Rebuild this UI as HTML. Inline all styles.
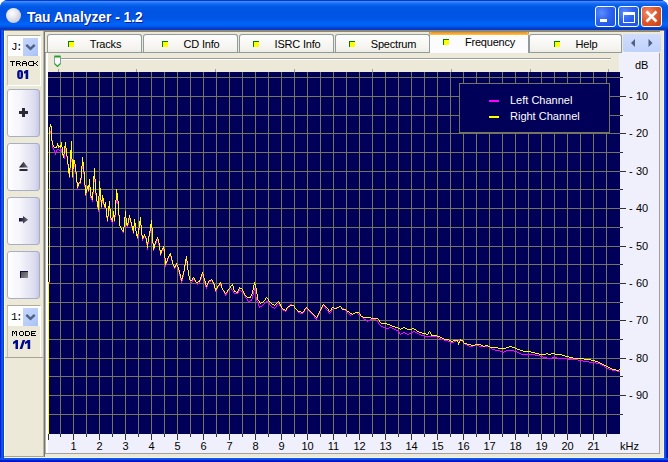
<!DOCTYPE html><html><head><meta charset="utf-8"><style>
*{margin:0;padding:0;box-sizing:content-box}
html,body{width:668px;height:462px;overflow:hidden;background:#fff;font-family:"Liberation Sans",sans-serif}
.abs{position:absolute}
.tab{position:absolute}
.tl{font-size:11px;color:#000;letter-spacing:-0.2px;line-height:12px;white-space:nowrap}
.sbtn{position:absolute;left:7px;width:31px;height:46px;border:1px solid #a7afc4;border-radius:3px;background:linear-gradient(90deg,#ffffff 0%,#f4f4fb 40%,#dcdcf0 85%,#c8c8e4 100%)}
</style></head><body>
<div class="abs" style="left:0;top:0;width:668px;height:462px;background:#0831d9;border-radius:8px 8px 0 0"></div>
<div class="abs" style="left:0;top:0;width:668px;height:30px;border-radius:8px 8px 0 0;background:linear-gradient(#0838d0 0px,#0838d0 1px,#3d8dff 1.01px,#3a8bff 2px,#1b72f6 3px,#0a62ec 5px,#0058e6 7px,#0054e3 12px,#0056e6 19px,#0062f6 23px,#0064f8 25px,#0052e2 27px,#0040d0 28px,#0838c0 29px,#0838c0 30px)"></div>
<div class="abs" style="left:0;top:30px;width:4px;height:432px;background:linear-gradient(90deg,#0010d0,#0030e0 1px,#1e6af0 2px,#0044e0 3px,#0044e0 4px)"></div>
<div class="abs" style="left:664px;top:30px;width:4px;height:432px;background:linear-gradient(90deg,#0044e0,#1e6af0 1px,#0030e0 2px,#0010c8 3px,#0010c8 4px)"></div>
<div class="abs" style="left:0;top:458px;width:668px;height:4px;background:linear-gradient(#0044e0,#1e6af0 1px,#0030e0 2px,#0010c8 3px,#0010c8 4px)"></div>
<div class="abs" style="left:6px;top:8px;width:15px;height:15px;border-radius:50%;background:radial-gradient(circle at 40% 35%,#ffffff 0%,#e8e8f0 35%,#c8c8d8 75%,#a0a8c8 100%)"></div>
<div class="abs" style="left:27px;top:10px;font-size:13.8px;font-weight:bold;color:#fff;text-shadow:1px 1px 0 #0a1e8c;white-space:nowrap;line-height:16px">Tau Analyzer - 1.2</div>
<div class="abs" style="left:595px;top:6px;width:19px;height:19px;border:1px solid #fff;border-radius:3px;background:radial-gradient(circle at 30% 30%,#5a8cff 0%,#2d63f0 45%,#1c50e0 100%);overflow:hidden"><div class="abs" style="left:4px;top:12px;width:7px;height:3px;background:#fff"></div></div>
<div class="abs" style="left:618px;top:6px;width:19px;height:19px;border:1px solid #fff;border-radius:3px;background:radial-gradient(circle at 30% 30%,#5a8cff 0%,#2d63f0 45%,#1c50e0 100%);overflow:hidden"><div class="abs" style="left:4px;top:5px;width:10px;height:7px;border:1px solid #fff;border-top:3px solid #fff"></div></div>
<div class="abs" style="left:641px;top:6px;width:19px;height:19px;border:1px solid #fff;border-radius:3px;background:radial-gradient(circle at 30% 30%,#f08a68 0%,#e05a30 45%,#c83c10 100%);overflow:hidden"><svg class="abs" style="left:0;top:0" width="19" height="19"><path d="M4.5,4.5 L14.5,14.5 M14.5,4.5 L4.5,14.5" stroke="#fff" stroke-width="2.6" stroke-linecap="butt"/></svg></div>
<div class="abs" style="left:4px;top:30px;width:660px;height:428px;background:#ece9d8"></div>
<div class="abs" style="left:4px;top:30px;width:660px;height:1px;background:#8d8a7a"></div>
<div class="abs" style="left:7px;top:35px;width:32px;height:49px;border:1px solid #fff;border-top-color:#b0ac9c;border-left-color:#c4c0b0;background:#ece9d8"></div><div class="abs" style="left:8px;top:36px;width:32px;height:20px;background:#fff"></div><div class="abs" style="left:23px;top:38px;width:15px;height:18px;background:linear-gradient(135deg,#c6d6fc,#b8cdfa 60%,#a8c0f8)"></div><svg class="abs" style="left:23px;top:38px" width="15" height="18"><path d="M3.3,6.8 L7.5,10.8 L11.7,6.8" stroke="#4d6185" stroke-width="2.4" fill="none"/></svg><div class="abs" style="left:11px;top:42px;font-family:'Liberation Mono';font-size:11px;line-height:11px;letter-spacing:-1.5px;color:#000">J:</div>
<div class="sbtn" style="top:89px"><svg class="abs" style="left:0;top:0" width="31" height="46"><path d="M11,22.5 h9 M15.5,18 v9" stroke="#2a2a36" stroke-width="3"/></svg></div>
<div class="sbtn" style="top:143px"><svg class="abs" style="left:0;top:0" width="31" height="46"><defs><linearGradient id="eg" x1="0" x2="1" y1="0" y2="0"><stop offset="0" stop-color="#1a1a2a"/><stop offset="1" stop-color="#707078"/></linearGradient></defs><path d="M11,23.5 L15.5,17.8 L20,23.5 Z" fill="url(#eg)"/><rect x="11.5" y="25" width="8" height="2" fill="#2a2a36"/></svg></div>
<div class="sbtn" style="top:197px"><svg class="abs" style="left:0;top:0" width="31" height="46"><defs><linearGradient id="ag" x1="0" x2="1" y1="0" y2="0"><stop offset="0" stop-color="#101038"/><stop offset="1" stop-color="#707070"/></linearGradient></defs><path d="M11,20 H15 V18 L20.2,21.8 L15,25.6 V23.5 H11 Z" fill="url(#ag)"/></svg></div>
<div class="sbtn" style="top:251px"><div class="abs" style="left:12px;top:19px;width:7px;height:6px;border-left:1px solid #101040;border-top:1px solid #101040;background:linear-gradient(135deg,#505058,#909090)"></div></div>
<div class="abs" style="left:7px;top:305px;width:32px;height:51px;border:1px solid #fff;border-top-color:#b0ac9c;border-left-color:#c4c0b0;background:#ece9d8"></div><div class="abs" style="left:8px;top:306px;width:32px;height:20px;background:#fff"></div><div class="abs" style="left:23px;top:308px;width:15px;height:18px;background:linear-gradient(135deg,#c6d6fc,#b8cdfa 60%,#a8c0f8)"></div><svg class="abs" style="left:23px;top:308px" width="15" height="18"><path d="M3.3,6.8 L7.5,10.8 L11.7,6.8" stroke="#4d6185" stroke-width="2.4" fill="none"/></svg><div class="abs" style="left:11px;top:312px;font-family:'Liberation Mono';font-size:11px;line-height:11px;letter-spacing:-1.5px;color:#000">1:</div>
<svg class="abs" style="left:0;top:0" width="48" height="462"><path d="M10,61h5v1h-5zM12,62h1v1h-1zM12,63h1v1h-1zM12,64h1v1h-1zM12,65h1v1h-1zM16,61h4v1h-4zM16,62h1v1h-1zM20,62h1v1h-1zM16,63h4v1h-4zM16,64h1v1h-1zM19,64h1v1h-1zM16,65h1v1h-1zM20,65h1v1h-1zM23,61h3v1h-3zM22,62h1v1h-1zM26,62h1v1h-1zM22,63h5v1h-5zM22,64h1v1h-1zM26,64h1v1h-1zM22,65h1v1h-1zM26,65h1v1h-1zM29,61h4v1h-4zM28,62h1v1h-1zM28,63h1v1h-1zM28,64h1v1h-1zM29,65h4v1h-4zM33,61h1v1h-1zM37,61h1v1h-1zM33,62h1v1h-1zM36,62h1v1h-1zM33,63h3v1h-3zM33,64h1v1h-1zM36,64h1v1h-1zM33,65h1v1h-1zM37,65h1v1h-1z" fill="#000000" shape-rendering="crispEdges"/></svg>
<svg class="abs" style="left:0;top:0" width="48" height="462"><path d="M12,331h2v1h-2zM15,331h2v1h-2zM12,332h1v1h-1zM14,332h1v1h-1zM16,332h1v1h-1zM12,333h1v1h-1zM14,333h1v1h-1zM16,333h1v1h-1zM12,334h1v1h-1zM16,334h1v1h-1zM12,335h1v1h-1zM16,335h1v1h-1zM20,331h3v1h-3zM19,332h1v1h-1zM23,332h1v1h-1zM19,333h1v1h-1zM23,333h1v1h-1zM19,334h1v1h-1zM23,334h1v1h-1zM20,335h3v1h-3zM25,331h4v1h-4zM25,332h1v1h-1zM29,332h1v1h-1zM25,333h1v1h-1zM29,333h1v1h-1zM25,334h1v1h-1zM29,334h1v1h-1zM25,335h4v1h-4zM31,331h5v1h-5zM31,332h1v1h-1zM31,333h4v1h-4zM31,334h1v1h-1zM31,335h5v1h-5z" fill="#000000" shape-rendering="crispEdges"/></svg>
<svg class="abs" style="left:0;top:0" width="48" height="462"><path d="M19.8,70 h0.6 a2.6,3.2 0 0 1 2.6,3.2 v2.6 a2.6,3.2 0 0 1 -2.6,3.2 h-0.6 a2.6,3.2 0 0 1 -2.6,-3.2 v-2.6 a2.6,3.2 0 0 1 2.6,-3.2 z M19.6,72.2 v4.6 a0.5,0.5 0 0 0 1,0 v-4.6 a0.5,0.5 0 0 0 -1,0 z" fill="#000a8a" fill-rule="evenodd"/><path d="M24,71.6 L26,70 H28.2 V79 H25.6 V72.9 L24,73.8 Z" fill="#000a8a"/><path d="M13,342 L15.8,340 H18 V349 H15.5 V343 L13,344.2 Z" fill="#000a8a"/><path d="M19.6,349 L22.2,349 L25.2,340 L22.6,340 Z" fill="#000a8a"/><path d="M25,342 L27.8,340 H30.2 V349 H27.6 V343 L25,344.2 Z" fill="#000a8a"/></svg>
<div class="abs" style="left:4px;top:357px;width:39px;height:1px;background:#a8a494"></div>
<div class="abs" style="left:4px;top:456px;width:40px;height:1px;background:#a8a494"></div>
<div class="abs" style="left:4px;top:31px;width:1px;height:425px;background:#fffdf4"></div>
<div class="abs" style="left:4px;top:457px;width:660px;height:1px;background:#f4f4f0"></div>
<div class="abs" style="left:663px;top:31px;width:1px;height:427px;background:#f4f4f0"></div>
<div class="abs" style="left:43px;top:31px;width:1px;height:426px;background:#b8b4a4"></div>
<div class="abs" style="left:44px;top:31px;width:1px;height:426px;background:#787670"></div>
<div class="abs" style="left:44px;top:31px;width:616px;height:1px;background:#8a887c"></div>
<div class="abs" style="left:45px;top:52px;width:577px;height:1px;background:#919b9c"></div>
<div class="abs" style="left:622px;top:52px;width:37px;height:1px;background:#f4f4fc"></div>
<div class="abs" style="left:45px;top:53px;width:614px;height:400px;background:#f0f0fc"></div>
<div class="abs" style="left:45px;top:53px;width:1px;height:400px;background:#b4b4ae"></div>
<div class="abs" style="left:46px;top:53px;width:2px;height:400px;background:#ffffff"></div>
<div class="abs" style="left:659px;top:53px;width:1px;height:401px;background:#a0a0a0"></div>
<div class="abs" style="left:45px;top:453px;width:615px;height:1px;background:#a0a0a0"></div>
<div class="abs" style="left:48px;top:53px;width:571px;height:19px;background:#ece9d8"></div>
<div class="abs" style="left:56px;top:58px;width:555px;height:1px;background:#9d9d98"></div>
<div class="abs" style="left:56px;top:59px;width:555px;height:1px;background:#ffffff"></div>
<div class="abs" style="left:58px;top:69px;width:1px;height:3px;background:#a0a0a0"></div><div class="abs" style="left:136px;top:69px;width:1px;height:3px;background:#a0a0a0"></div><div class="abs" style="left:215px;top:69px;width:1px;height:3px;background:#a0a0a0"></div><div class="abs" style="left:294px;top:69px;width:1px;height:3px;background:#a0a0a0"></div><div class="abs" style="left:372px;top:69px;width:1px;height:3px;background:#a0a0a0"></div><div class="abs" style="left:451px;top:69px;width:1px;height:3px;background:#a0a0a0"></div><div class="abs" style="left:530px;top:69px;width:1px;height:3px;background:#a0a0a0"></div><div class="abs" style="left:608px;top:69px;width:1px;height:3px;background:#a0a0a0"></div>
<svg class="abs" style="left:53px;top:55px" width="9" height="13"><path d="M1.5,1.5 h6 v7 l-3,3 l-3,-3 z" fill="#fafafa" stroke="#8c9cac" stroke-width="1"/><path d="M1.5,1.5 h6" stroke="#21a121" stroke-width="2"/><path d="M1.5,8.5 l3,3 l3,-3" stroke="#21a121" stroke-width="1.2" fill="none"/></svg>
<div class="tab" style="left:47px;top:34px;width:93px;height:17px;background:linear-gradient(#fefefe,#f4f3ee 80%,#ecebe6);border:1px solid #919b9c;border-bottom:none;border-radius:3px 3px 0 0;"><div style="position:absolute;left:0;right:0;top:3px;height:12px;display:flex;justify-content:center;align-items:center"><span style="display:inline-block;width:5px;height:5px;background:#ffff00;border-left:1px solid #008000;border-top:1px solid #008000;margin-right:16px;margin-top:0px"></span><span class="tl">Tracks</span></div></div>
<div class="tab" style="left:143px;top:34px;width:93px;height:17px;background:linear-gradient(#fefefe,#f4f3ee 80%,#ecebe6);border:1px solid #919b9c;border-bottom:none;border-radius:3px 3px 0 0;"><div style="position:absolute;left:0;right:0;top:3px;height:12px;display:flex;justify-content:center;align-items:center"><span style="display:inline-block;width:5px;height:5px;background:#ffff00;border-left:1px solid #008000;border-top:1px solid #008000;margin-right:16px;margin-top:0px"></span><span class="tl">CD Info</span></div></div>
<div class="tab" style="left:239px;top:34px;width:93px;height:17px;background:linear-gradient(#fefefe,#f4f3ee 80%,#ecebe6);border:1px solid #919b9c;border-bottom:none;border-radius:3px 3px 0 0;"><div style="position:absolute;left:0;right:0;top:3px;height:12px;display:flex;justify-content:center;align-items:center"><span style="display:inline-block;width:5px;height:5px;background:#ffff00;border-left:1px solid #008000;border-top:1px solid #008000;margin-right:16px;margin-top:0px"></span><span class="tl">ISRC Info</span></div></div>
<div class="tab" style="left:335px;top:34px;width:93px;height:17px;background:linear-gradient(#fefefe,#f4f3ee 80%,#ecebe6);border:1px solid #919b9c;border-bottom:none;border-radius:3px 3px 0 0;"><div style="position:absolute;left:0;right:0;top:3px;height:12px;display:flex;justify-content:center;align-items:center"><span style="display:inline-block;width:5px;height:5px;background:#ffff00;border-left:1px solid #008000;border-top:1px solid #008000;margin-right:16px;margin-top:0px"></span><span class="tl">Spectrum</span></div></div>
<div class="tab" style="left:529px;top:34px;width:91px;height:17px;background:linear-gradient(#fefefe,#f4f3ee 80%,#ecebe6);border:1px solid #919b9c;border-bottom:none;border-radius:3px 3px 0 0;"><div style="position:absolute;left:0;right:0;top:3px;height:12px;display:flex;justify-content:center;align-items:center"><span style="display:inline-block;width:5px;height:5px;background:#ffff00;border-left:1px solid #008000;border-top:1px solid #008000;margin-right:16px;margin-top:0px"></span><span class="tl">Help</span></div></div>
<div class="tab" style="left:429px;top:32px;width:98px;height:21px;background:#fcfcfe;border:1px solid #919b9c;border-bottom:none;border-top:none;"><div style="position:absolute;left:-1px;top:0;width:100px;height:3px;background:linear-gradient(#e68b2c,#ffc73c);border-radius:3px 3px 0 0"></div><div style="position:absolute;left:0;right:0;top:4px;height:12px;display:flex;justify-content:center;align-items:center"><span style="display:inline-block;width:5px;height:5px;background:#ffff00;border-left:1px solid #008000;border-top:1px solid #008000;margin-right:16px;margin-top:0px"></span><span class="tl">Frequency</span></div></div>
<div class="abs" style="left:623px;top:34px;width:38px;height:18px;background:linear-gradient(#d0dcfc,#c0d2fb);border-radius:2px"></div>
<svg class="abs" style="left:623px;top:34px" width="38" height="18"><path d="M12,5 L8,9 L12,13 Z" fill="#4d6185"/><path d="M25.5,5 L29.5,9 L25.5,13 Z" fill="#4d6185"/></svg>
<svg width="668" height="462" style="position:absolute;left:0;top:0">
<rect x="48" y="72" width="572" height="362" fill="#000058"/>
<path d="M60.5,72 V434 M73.5,72 V434 M86.5,72 V434 M99.5,72 V434 M112.5,72 V434 M125.5,72 V434 M138.5,72 V434 M151.5,72 V434 M164.5,72 V434 M177.5,72 V434 M190.5,72 V434 M203.5,72 V434 M216.5,72 V434 M229.5,72 V434 M242.5,72 V434 M255.5,72 V434 M268.5,72 V434 M281.5,72 V434 M294.5,72 V434 M307.5,72 V434 M320.5,72 V434 M333.5,72 V434 M346.5,72 V434 M359.5,72 V434 M372.5,72 V434 M385.5,72 V434 M398.5,72 V434 M411.5,72 V434 M424.5,72 V434 M437.5,72 V434 M450.5,72 V434 M463.5,72 V434 M476.5,72 V434 M489.5,72 V434 M502.5,72 V434 M515.5,72 V434 M528.5,72 V434 M541.5,72 V434 M554.5,72 V434 M567.5,72 V434 M580.5,72 V434 M593.5,72 V434 M606.5,72 V434 M48,77.5 H620 M48,96.5 H620 M48,115.5 H620 M48,133.5 H620 M48,152.5 H620 M48,171.5 H620 M48,189.5 H620 M48,208.5 H620 M48,227.5 H620 M48,246.5 H620 M48,264.5 H620 M48,283.5 H620 M48,302.5 H620 M48,320.5 H620 M48,339.5 H620 M48,358.5 H620 M48,376.5 H620 M48,395.5 H620 M48,414.5 H620" stroke="#757560" stroke-width="1" fill="none" shape-rendering="crispEdges"/>
<rect x="459.5" y="83.5" width="150" height="49" fill="#000058" stroke="#757560" stroke-width="1" shape-rendering="crispEdges"/>
<rect x="489" y="100" width="10" height="2" fill="#ff00ff"/>
<rect x="489" y="116" width="10" height="2" fill="#ffff00"/>
<text x="510" y="104" font-family="Liberation Sans" font-size="11" fill="#ffffff">Left Channel</text>
<text x="510" y="120" font-family="Liberation Sans" font-size="11" fill="#ffffff">Right Channel</text>
<path d="M48,283h1v152h-1zM49,133h1v150h-1zM50,131h1v3h-1zM51,134h1v6h-1zM52,140h1v8h-1zM53,148h1v2h-1zM54,150h1v3h-1zM55,153h1v2h-1zM56,150h1v3h-1zM57,149h1v1h-1zM58,149h1v1h-1zM59,150h1v1h-1zM60,149h1v1h-1zM61,149h1v3h-1zM62,152h1v4h-1zM63,156h1v2h-1zM64,152h1v7h-1zM65,144h1v8h-1zM66,150h1v7h-1zM67,157h1v8h-1zM68,165h1v9h-1zM69,170h1v8h-1zM70,154h1v16h-1zM71,146h1v16h-1zM72,162h1v16h-1zM73,163h1v8h-1zM74,163h1v4h-1zM75,167h1v7h-1zM76,174h1v9h-1zM77,183h1v7h-1zM78,184h1v3h-1zM79,183h1v1h-1zM80,180h1v4h-1zM81,169h1v11h-1zM82,161h1v8h-1zM83,166h1v8h-1zM84,174h1v13h-1zM85,187h1v9h-1zM86,190h1v4h-1zM87,187h1v3h-1zM88,187h1v5h-1zM89,181h1v8h-1zM90,189h1v9h-1zM91,198h1v2h-1zM92,194h1v8h-1zM93,180h1v14h-1zM94,172h1v10h-1zM95,182h1v13h-1zM96,195h1v7h-1zM97,202h1v6h-1zM98,198h1v14h-1zM99,184h1v14h-1zM100,190h1v12h-1zM101,202h1v6h-1zM102,198h1v5h-1zM103,201h1v4h-1zM104,205h1v3h-1zM105,204h1v5h-1zM106,209h1v9h-1zM107,217h1v5h-1zM108,208h1v9h-1zM109,203h1v8h-1zM110,211h1v9h-1zM111,220h1v2h-1zM112,218h1v6h-1zM113,212h1v6h-1zM114,217h1v5h-1zM115,203h1v14h-1zM116,193h1v10h-1zM117,197h1v7h-1zM118,204h1v12h-1zM119,216h1v10h-1zM120,226h1v2h-1zM121,228h1v2h-1zM122,230h1v2h-1zM123,228h1v5h-1zM124,218h1v10h-1zM125,213h1v6h-1zM126,219h1v7h-1zM127,225h1v3h-1zM128,220h1v5h-1zM129,217h1v3h-1zM130,219h1v4h-1zM131,223h1v4h-1zM132,227h1v4h-1zM133,227h1v7h-1zM134,220h1v7h-1zM135,224h1v7h-1zM136,231h1v5h-1zM137,236h1v3h-1zM138,230h1v6h-1zM139,224h1v6h-1zM140,220h1v6h-1zM141,226h1v10h-1zM142,236h1v5h-1zM143,237h1v2h-1zM144,235h1v2h-1zM145,237h1v2h-1zM146,239h1v6h-1zM147,244h1v6h-1zM148,237h1v7h-1zM149,233h1v4h-1zM150,227h1v6h-1zM151,223h1v7h-1zM152,230h1v14h-1zM153,244h1v7h-1zM154,245h1v4h-1zM155,243h1v2h-1zM156,241h1v2h-1zM157,239h1v2h-1zM158,241h1v4h-1zM159,245h1v6h-1zM160,251h1v5h-1zM161,251h1v3h-1zM162,249h1v2h-1zM163,248h1v3h-1zM164,251h1v9h-1zM165,260h1v7h-1zM166,262h1v3h-1zM167,259h1v3h-1zM168,257h1v2h-1zM169,255h1v2h-1zM170,255h1v2h-1zM171,257h1v4h-1zM172,261h1v3h-1zM173,264h1v3h-1zM174,267h1v2h-1zM175,266h1v2h-1zM176,264h1v2h-1zM177,266h1v2h-1zM178,268h1v4h-1zM179,272h1v4h-1zM180,276h1v4h-1zM181,280h1v3h-1zM182,277h1v4h-1zM183,272h1v5h-1zM184,266h1v6h-1zM185,262h1v4h-1zM186,259h1v4h-1zM187,263h1v7h-1zM188,270h1v6h-1zM189,276h1v4h-1zM190,280h1v2h-1zM191,282h1v1h-1zM192,280h1v2h-1zM193,278h1v2h-1zM194,279h1v2h-1zM195,281h1v1h-1zM196,282h1v2h-1zM197,284h1v1h-1zM198,283h1v1h-1zM199,281h1v2h-1zM200,279h1v2h-1zM201,276h1v3h-1zM202,274h1v2h-1zM203,276h1v3h-1zM204,279h1v4h-1zM205,283h1v4h-1zM206,287h1v2h-1zM207,284h1v3h-1zM208,282h1v2h-1zM209,281h1v1h-1zM210,281h1v1h-1zM211,280h1v1h-1zM212,281h1v2h-1zM213,283h1v2h-1zM214,285h1v4h-1zM215,289h1v3h-1zM216,289h1v2h-1zM217,287h1v2h-1zM218,286h1v1h-1zM219,285h1v1h-1zM220,284h1v2h-1zM221,286h1v2h-1zM222,288h1v2h-1zM223,290h1v2h-1zM224,292h1v2h-1zM225,294h1v2h-1zM226,293h1v2h-1zM227,291h1v2h-1zM228,289h1v2h-1zM229,288h1v1h-1zM230,287h1v1h-1zM231,288h1v2h-1zM232,290h1v1h-1zM233,291h1v2h-1zM234,293h1v1h-1zM235,293h1v1h-1zM236,293h1v1h-1zM237,293h1v1h-1zM238,291h1v2h-1zM239,289h1v2h-1zM240,290h1v1h-1zM241,291h1v1h-1zM242,292h1v1h-1zM243,293h1v1h-1zM244,294h1v2h-1zM245,296h1v2h-1zM246,298h1v1h-1zM247,299h1v2h-1zM248,301h1v1h-1zM249,301h1v1h-1zM250,300h1v1h-1zM251,299h1v2h-1zM252,295h1v4h-1zM253,291h1v4h-1zM254,288h1v3h-1zM255,291h1v6h-1zM256,297h1v4h-1zM257,301h1v2h-1zM258,303h1v3h-1zM259,306h1v2h-1zM260,306h1v1h-1zM261,306h1v1h-1zM262,305h1v1h-1zM263,304h1v1h-1zM264,303h1v1h-1zM265,302h1v1h-1zM266,301h1v1h-1zM267,301h1v1h-1zM268,302h1v1h-1zM269,303h1v2h-1zM270,305h1v1h-1zM271,306h1v1h-1zM272,307h1v1h-1zM273,307h1v1h-1zM274,308h1v1h-1zM275,307h1v1h-1zM276,305h1v2h-1zM277,304h1v1h-1zM278,303h1v1h-1zM279,304h1v2h-1zM280,306h1v1h-1zM281,307h1v2h-1zM282,309h1v1h-1zM283,310h1v1h-1zM284,310h1v1h-1zM285,311h1v1h-1zM286,309h1v2h-1zM287,308h1v1h-1zM288,307h1v1h-1zM289,305h1v2h-1zM290,304h1v1h-1zM291,304h1v1h-1zM292,305h1v1h-1zM293,305h1v1h-1zM294,306h1v2h-1zM295,308h1v1h-1zM296,309h1v1h-1zM297,310h1v2h-1zM298,312h1v1h-1zM299,312h1v1h-1zM300,313h1v1h-1zM301,313h1v1h-1zM302,313h1v1h-1zM303,312h1v1h-1zM304,310h1v2h-1zM305,309h1v1h-1zM306,308h1v1h-1zM307,309h1v1h-1zM308,310h1v1h-1zM309,311h1v1h-1zM310,312h1v1h-1zM311,313h1v1h-1zM312,314h1v1h-1zM313,315h1v1h-1zM314,316h1v2h-1zM315,318h1v1h-1zM316,318h1v2h-1zM317,316h1v2h-1zM318,314h1v2h-1zM319,312h1v2h-1zM320,310h1v2h-1zM321,308h1v2h-1zM322,306h1v2h-1zM323,305h1v1h-1zM324,306h1v1h-1zM325,307h1v2h-1zM326,309h1v1h-1zM327,310h1v1h-1zM328,311h1v2h-1zM329,313h1v1h-1zM330,312h1v1h-1zM331,310h1v2h-1zM332,309h1v1h-1zM333,309h1v1h-1zM334,308h1v1h-1zM335,308h1v1h-1zM336,307h1v1h-1zM337,307h1v1h-1zM338,307h1v1h-1zM339,306h1v1h-1zM340,306h1v1h-1zM341,307h1v1h-1zM342,308h1v1h-1zM343,308h1v1h-1zM344,309h1v1h-1zM345,310h1v1h-1zM346,311h1v1h-1zM347,312h1v1h-1zM348,313h1v1h-1zM349,314h1v1h-1zM350,315h1v1h-1zM351,314h1v1h-1zM352,314h1v1h-1zM353,313h1v1h-1zM354,313h1v1h-1zM355,312h1v1h-1zM356,312h1v1h-1zM357,313h1v1h-1zM358,314h1v1h-1zM359,315h1v1h-1zM360,315h1v1h-1zM361,316h1v1h-1zM362,317h1v1h-1zM363,318h1v1h-1zM364,319h1v1h-1zM365,319h1v1h-1zM366,320h1v1h-1zM367,321h1v1h-1zM368,320h1v1h-1zM369,320h1v1h-1zM370,319h1v1h-1zM371,319h1v1h-1zM372,319h1v1h-1zM373,319h1v1h-1zM374,319h1v1h-1zM375,319h1v1h-1zM376,320h1v1h-1zM377,321h1v1h-1zM378,322h1v2h-1zM379,324h1v1h-1zM380,325h1v1h-1zM381,326h1v1h-1zM382,326h1v1h-1zM383,327h1v1h-1zM384,327h1v1h-1zM385,328h1v1h-1zM386,328h1v1h-1zM387,328h1v1h-1zM388,328h1v1h-1zM389,327h1v1h-1zM390,327h1v1h-1zM391,327h1v1h-1zM392,328h1v1h-1zM393,328h1v1h-1zM394,329h1v1h-1zM395,329h1v1h-1zM396,330h1v1h-1zM397,330h1v1h-1zM398,331h1v1h-1zM399,332h1v2h-1zM400,334h1v1h-1zM401,333h1v1h-1zM402,333h1v1h-1zM403,332h1v1h-1zM404,332h1v1h-1zM405,333h1v1h-1zM406,333h1v1h-1zM407,334h1v1h-1zM408,334h1v1h-1zM409,333h1v1h-1zM410,333h1v1h-1zM411,332h1v1h-1zM412,332h1v1h-1zM413,331h1v1h-1zM414,331h1v1h-1zM415,332h1v1h-1zM416,332h1v1h-1zM417,333h1v1h-1zM418,333h1v1h-1zM419,334h1v1h-1zM420,334h1v1h-1zM421,335h1v1h-1zM422,335h1v1h-1zM423,335h1v1h-1zM424,336h1v1h-1zM425,336h1v1h-1zM426,336h1v1h-1zM427,336h1v1h-1zM428,336h1v1h-1zM429,336h1v1h-1zM430,336h1v1h-1zM431,336h1v1h-1zM432,336h1v1h-1zM433,336h1v1h-1zM434,336h1v1h-1zM435,336h1v1h-1zM436,336h1v1h-1zM437,337h1v1h-1zM438,337h1v1h-1zM439,338h1v1h-1zM440,338h1v1h-1zM441,339h1v1h-1zM442,339h1v1h-1zM443,339h1v1h-1zM444,340h1v1h-1zM445,340h1v1h-1zM446,340h1v1h-1zM447,340h1v1h-1zM448,341h1v1h-1zM449,341h1v1h-1zM450,342h1v1h-1zM451,342h1v1h-1zM452,342h1v1h-1zM453,342h1v1h-1zM454,341h1v1h-1zM455,341h1v1h-1zM456,340h1v1h-1zM457,340h1v1h-1zM458,340h1v1h-1zM459,340h1v1h-1zM460,340h1v1h-1zM461,340h1v1h-1zM462,341h1v1h-1zM463,342h1v1h-1zM464,343h1v1h-1zM465,344h1v1h-1zM466,344h1v1h-1zM467,345h1v1h-1zM468,345h1v1h-1zM469,346h1v1h-1zM470,346h1v1h-1zM471,346h1v1h-1zM472,346h1v1h-1zM473,345h1v1h-1zM474,345h1v1h-1zM475,345h1v1h-1zM476,345h1v1h-1zM477,345h1v1h-1zM478,345h1v1h-1zM479,346h1v1h-1zM480,346h1v1h-1zM481,346h1v1h-1zM482,346h1v1h-1zM483,346h1v1h-1zM484,346h1v1h-1zM485,346h1v1h-1zM486,346h1v1h-1zM487,346h1v1h-1zM488,346h1v1h-1zM489,346h1v1h-1zM490,347h1v1h-1zM491,348h1v1h-1zM492,349h1v1h-1zM493,349h1v1h-1zM494,349h1v1h-1zM495,350h1v1h-1zM496,350h1v1h-1zM497,350h1v1h-1zM498,350h1v1h-1zM499,350h1v1h-1zM500,351h1v1h-1zM501,351h1v1h-1zM502,352h1v1h-1zM503,352h1v1h-1zM504,351h1v1h-1zM505,351h1v1h-1zM506,350h1v1h-1zM507,350h1v1h-1zM508,350h1v1h-1zM509,350h1v1h-1zM510,350h1v1h-1zM511,350h1v1h-1zM512,350h1v1h-1zM513,350h1v1h-1zM514,351h1v1h-1zM515,351h1v1h-1zM516,351h1v1h-1zM517,352h1v1h-1zM518,352h1v1h-1zM519,353h1v1h-1zM520,353h1v1h-1zM521,354h1v1h-1zM522,354h1v1h-1zM523,354h1v1h-1zM524,354h1v1h-1zM525,354h1v1h-1zM526,354h1v1h-1zM527,354h1v1h-1zM528,354h1v1h-1zM529,354h1v1h-1zM530,354h1v1h-1zM531,354h1v1h-1zM532,354h1v1h-1zM533,354h1v1h-1zM534,354h1v1h-1zM535,355h1v1h-1zM536,355h1v1h-1zM537,355h1v1h-1zM538,355h1v1h-1zM539,355h1v1h-1zM540,356h1v1h-1zM541,356h1v1h-1zM542,356h1v1h-1zM543,357h1v1h-1zM544,357h1v1h-1zM545,357h1v1h-1zM546,357h1v1h-1zM547,358h1v1h-1zM548,358h1v1h-1zM549,358h1v1h-1zM550,358h1v1h-1zM551,358h1v1h-1zM552,357h1v1h-1zM553,357h1v1h-1zM554,357h1v1h-1zM555,357h1v1h-1zM556,357h1v1h-1zM557,358h1v1h-1zM558,358h1v1h-1zM559,358h1v1h-1zM560,358h1v1h-1zM561,358h1v1h-1zM562,358h1v1h-1zM563,358h1v1h-1zM564,358h1v1h-1zM565,358h1v1h-1zM566,358h1v1h-1zM567,358h1v1h-1zM568,359h1v1h-1zM569,359h1v1h-1zM570,359h1v1h-1zM571,359h1v1h-1zM572,359h1v1h-1zM573,359h1v1h-1zM574,359h1v1h-1zM575,359h1v1h-1zM576,359h1v1h-1zM577,359h1v1h-1zM578,360h1v1h-1zM579,360h1v1h-1zM580,360h1v1h-1zM581,360h1v1h-1zM582,360h1v1h-1zM583,361h1v1h-1zM584,361h1v1h-1zM585,361h1v1h-1zM586,361h1v1h-1zM587,361h1v1h-1zM588,361h1v1h-1zM589,362h1v1h-1zM590,362h1v1h-1zM591,362h1v1h-1zM592,362h1v1h-1zM593,362h1v1h-1zM594,362h1v1h-1zM595,362h1v1h-1zM596,363h1v1h-1zM597,363h1v1h-1zM598,363h1v1h-1zM599,363h1v1h-1zM600,364h1v1h-1zM601,364h1v1h-1zM602,365h1v1h-1zM603,365h1v1h-1zM604,366h1v1h-1zM605,367h1v1h-1zM606,367h1v1h-1zM607,368h1v1h-1zM608,368h1v1h-1zM609,369h1v1h-1zM610,369h1v1h-1zM611,369h1v1h-1zM612,370h1v1h-1zM613,370h1v1h-1zM614,370h1v1h-1zM615,370h1v1h-1zM616,370h1v1h-1zM617,371h1v1h-1zM618,371h1v1h-1zM619,371h1v1h-1z" fill="#ff00ff" shape-rendering="crispEdges"/>
<path d="M48,282h1v153h-1zM49,127h1v155h-1zM50,124h1v3h-1zM51,126h1v15h-1zM52,141h1v4h-1zM53,145h1v2h-1zM54,147h1v1h-1zM55,147h1v1h-1zM56,146h1v2h-1zM57,143h1v3h-1zM58,145h1v3h-1zM59,146h1v1h-1zM60,145h1v3h-1zM61,142h1v5h-1zM62,147h1v8h-1zM63,154h1v4h-1zM64,146h1v8h-1zM65,142h1v6h-1zM66,148h1v8h-1zM67,156h1v8h-1zM68,164h1v9h-1zM69,168h1v9h-1zM70,150h1v18h-1zM71,141h1v18h-1zM72,159h1v18h-1zM73,160h1v9h-1zM74,160h1v4h-1zM75,164h1v8h-1zM76,172h1v10h-1zM77,182h1v6h-1zM78,183h1v3h-1zM79,182h1v1h-1zM80,178h1v5h-1zM81,166h1v12h-1zM82,157h1v9h-1zM83,162h1v10h-1zM84,172h1v13h-1zM85,185h1v10h-1zM86,189h1v4h-1zM87,186h1v3h-1zM88,185h1v6h-1zM89,179h1v8h-1zM90,187h1v9h-1zM91,196h1v2h-1zM92,192h1v8h-1zM93,176h1v16h-1zM94,168h1v11h-1zM95,179h1v14h-1zM96,193h1v8h-1zM97,201h1v6h-1zM98,196h1v14h-1zM99,181h1v15h-1zM100,188h1v12h-1zM101,200h1v7h-1zM102,195h1v6h-1zM103,198h1v6h-1zM104,204h1v3h-1zM105,202h1v6h-1zM106,208h1v9h-1zM107,216h1v5h-1zM108,206h1v10h-1zM109,201h1v8h-1zM110,209h1v9h-1zM111,218h1v2h-1zM112,217h1v5h-1zM113,211h1v6h-1zM114,215h1v6h-1zM115,200h1v15h-1zM116,189h1v11h-1zM117,193h1v8h-1zM118,201h1v14h-1zM119,215h1v11h-1zM120,226h1v2h-1zM121,228h1v2h-1zM122,230h1v1h-1zM123,227h1v5h-1zM124,217h1v10h-1zM125,211h1v7h-1zM126,218h1v7h-1zM127,223h1v3h-1zM128,218h1v5h-1zM129,215h1v3h-1zM130,218h1v4h-1zM131,222h1v4h-1zM132,226h1v4h-1zM133,226h1v7h-1zM134,219h1v7h-1zM135,223h1v8h-1zM136,231h1v5h-1zM137,234h1v4h-1zM138,228h1v6h-1zM139,221h1v7h-1zM140,217h1v8h-1zM141,225h1v10h-1zM142,235h1v4h-1zM143,236h1v2h-1zM144,234h1v2h-1zM145,236h1v2h-1zM146,238h1v5h-1zM147,242h1v6h-1zM148,236h1v6h-1zM149,231h1v5h-1zM150,224h1v7h-1zM151,220h1v8h-1zM152,228h1v15h-1zM153,243h1v7h-1zM154,244h1v4h-1zM155,241h1v3h-1zM156,239h1v2h-1zM157,237h1v2h-1zM158,239h1v4h-1zM159,243h1v7h-1zM160,250h1v5h-1zM161,250h1v3h-1zM162,248h1v2h-1zM163,246h1v3h-1zM164,249h1v9h-1zM165,258h1v7h-1zM166,261h1v2h-1zM167,258h1v3h-1zM168,256h1v2h-1zM169,254h1v2h-1zM170,253h1v3h-1zM171,256h1v4h-1zM172,260h1v4h-1zM173,264h1v2h-1zM174,266h1v2h-1zM175,265h1v2h-1zM176,263h1v2h-1zM177,265h1v2h-1zM178,267h1v3h-1zM179,270h1v4h-1zM180,274h1v4h-1zM181,278h1v3h-1zM182,275h1v4h-1zM183,271h1v4h-1zM184,265h1v6h-1zM185,259h1v6h-1zM186,256h1v5h-1zM187,261h1v9h-1zM188,270h1v6h-1zM189,276h1v4h-1zM190,280h1v1h-1zM191,280h1v1h-1zM192,278h1v2h-1zM193,277h1v1h-1zM194,278h1v2h-1zM195,280h1v2h-1zM196,282h1v1h-1zM197,282h1v1h-1zM198,281h1v1h-1zM199,280h1v2h-1zM200,277h1v3h-1zM201,274h1v3h-1zM202,272h1v2h-1zM203,274h1v4h-1zM204,278h1v3h-1zM205,281h1v4h-1zM206,285h1v2h-1zM207,283h1v2h-1zM208,281h1v2h-1zM209,280h1v1h-1zM210,280h1v1h-1zM211,279h1v1h-1zM212,280h1v2h-1zM213,282h1v2h-1zM214,284h1v4h-1zM215,288h1v3h-1zM216,288h1v2h-1zM217,286h1v2h-1zM218,285h1v1h-1zM219,283h1v2h-1zM220,282h1v2h-1zM221,284h1v4h-1zM222,288h1v2h-1zM223,290h1v1h-1zM224,291h1v2h-1zM225,293h1v1h-1zM226,292h1v1h-1zM227,290h1v2h-1zM228,289h1v1h-1zM229,288h1v1h-1zM230,286h1v2h-1zM231,285h1v1h-1zM232,284h1v2h-1zM233,286h1v4h-1zM234,290h1v2h-1zM235,291h1v1h-1zM236,292h1v1h-1zM237,291h1v2h-1zM238,289h1v2h-1zM239,287h1v2h-1zM240,288h1v1h-1zM241,288h1v1h-1zM242,289h1v2h-1zM243,291h1v2h-1zM244,293h1v2h-1zM245,295h1v1h-1zM246,296h1v1h-1zM247,297h1v1h-1zM248,297h1v1h-1zM249,297h1v1h-1zM250,296h1v2h-1zM251,294h1v2h-1zM252,290h1v4h-1zM253,285h1v5h-1zM254,282h1v3h-1zM255,284h1v4h-1zM256,288h1v6h-1zM257,294h1v6h-1zM258,300h1v1h-1zM259,301h1v2h-1zM260,303h1v1h-1zM261,302h1v1h-1zM262,302h1v1h-1zM263,301h1v1h-1zM264,300h1v1h-1zM265,298h1v2h-1zM266,297h1v1h-1zM267,298h1v1h-1zM268,299h1v2h-1zM269,301h1v1h-1zM270,302h1v1h-1zM271,303h1v1h-1zM272,304h1v1h-1zM273,304h1v1h-1zM274,305h1v1h-1zM275,304h1v1h-1zM276,303h1v1h-1zM277,302h1v1h-1zM278,301h1v1h-1zM279,302h1v2h-1zM280,304h1v2h-1zM281,306h1v2h-1zM282,308h1v1h-1zM283,309h1v1h-1zM284,309h1v1h-1zM285,310h1v1h-1zM286,308h1v2h-1zM287,307h1v1h-1zM288,306h1v1h-1zM289,306h1v1h-1zM290,305h1v1h-1zM291,305h1v1h-1zM292,305h1v1h-1zM293,305h1v1h-1zM294,306h1v2h-1zM295,308h1v1h-1zM296,309h1v1h-1zM297,310h1v1h-1zM298,311h1v1h-1zM299,311h1v1h-1zM300,311h1v1h-1zM301,312h1v1h-1zM302,312h1v1h-1zM303,311h1v1h-1zM304,309h1v2h-1zM305,308h1v1h-1zM306,307h1v1h-1zM307,308h1v1h-1zM308,309h1v1h-1zM309,310h1v1h-1zM310,311h1v1h-1zM311,312h1v1h-1zM312,313h1v1h-1zM313,314h1v1h-1zM314,315h1v1h-1zM315,316h1v1h-1zM316,317h1v1h-1zM317,315h1v2h-1zM318,313h1v2h-1zM319,311h1v2h-1zM320,309h1v2h-1zM321,307h1v2h-1zM322,305h1v2h-1zM323,304h1v1h-1zM324,305h1v1h-1zM325,306h1v1h-1zM326,307h1v1h-1zM327,308h1v1h-1zM328,309h1v2h-1zM329,311h1v1h-1zM330,310h1v1h-1zM331,308h1v2h-1zM332,307h1v1h-1zM333,307h1v1h-1zM334,308h1v1h-1zM335,308h1v1h-1zM336,308h1v1h-1zM337,307h1v1h-1zM338,307h1v1h-1zM339,306h1v1h-1zM340,306h1v1h-1zM341,307h1v2h-1zM342,309h1v1h-1zM343,309h1v1h-1zM344,309h1v1h-1zM345,309h1v1h-1zM346,310h1v1h-1zM347,311h1v1h-1zM348,311h1v1h-1zM349,312h1v1h-1zM350,313h1v1h-1zM351,313h1v1h-1zM352,314h1v1h-1zM353,313h1v1h-1zM354,313h1v1h-1zM355,312h1v1h-1zM356,312h1v1h-1zM357,312h1v1h-1zM358,312h1v1h-1zM359,313h1v1h-1zM360,314h1v2h-1zM361,316h1v1h-1zM362,316h1v1h-1zM363,317h1v1h-1zM364,317h1v1h-1zM365,317h1v1h-1zM366,317h1v1h-1zM367,317h1v1h-1zM368,317h1v1h-1zM369,317h1v1h-1zM370,317h1v1h-1zM371,318h1v1h-1zM372,318h1v1h-1zM373,318h1v1h-1zM374,318h1v1h-1zM375,318h1v1h-1zM376,318h1v1h-1zM377,318h1v1h-1zM378,319h1v1h-1zM379,320h1v2h-1zM380,322h1v1h-1zM381,323h1v1h-1zM382,323h1v1h-1zM383,323h1v1h-1zM384,323h1v1h-1zM385,323h1v1h-1zM386,323h1v1h-1zM387,324h1v1h-1zM388,324h1v1h-1zM389,324h1v1h-1zM390,325h1v1h-1zM391,325h1v1h-1zM392,326h1v1h-1zM393,326h1v1h-1zM394,326h1v1h-1zM395,327h1v1h-1zM396,327h1v1h-1zM397,327h1v1h-1zM398,328h1v1h-1zM399,328h1v1h-1zM400,329h1v1h-1zM401,328h1v1h-1zM402,328h1v1h-1zM403,327h1v1h-1zM404,327h1v1h-1zM405,328h1v1h-1zM406,328h1v1h-1zM407,329h1v1h-1zM408,329h1v1h-1zM409,329h1v1h-1zM410,329h1v1h-1zM411,329h1v1h-1zM412,328h1v1h-1zM413,328h1v1h-1zM414,329h1v1h-1zM415,329h1v1h-1zM416,330h1v1h-1zM417,331h1v1h-1zM418,331h1v1h-1zM419,332h1v1h-1zM420,332h1v1h-1zM421,332h1v1h-1zM422,333h1v1h-1zM423,333h1v1h-1zM424,333h1v1h-1zM425,333h1v1h-1zM426,334h1v1h-1zM427,334h1v1h-1zM428,332h1v2h-1zM429,331h1v1h-1zM430,332h1v2h-1zM431,334h1v2h-1zM432,335h1v1h-1zM433,335h1v1h-1zM434,335h1v1h-1zM435,335h1v1h-1zM436,335h1v1h-1zM437,336h1v1h-1zM438,336h1v1h-1zM439,336h1v1h-1zM440,337h1v1h-1zM441,337h1v1h-1zM442,338h1v1h-1zM443,338h1v1h-1zM444,339h1v1h-1zM445,339h1v1h-1zM446,339h1v1h-1zM447,339h1v1h-1zM448,339h1v1h-1zM449,340h1v1h-1zM450,340h1v1h-1zM451,341h1v1h-1zM452,341h1v1h-1zM453,340h1v1h-1zM454,340h1v1h-1zM455,340h1v1h-1zM456,340h1v1h-1zM457,340h1v2h-1zM458,342h1v3h-1zM459,341h1v2h-1zM460,339h1v2h-1zM461,340h1v1h-1zM462,340h1v1h-1zM463,341h1v2h-1zM464,343h1v1h-1zM465,343h1v1h-1zM466,343h1v1h-1zM467,344h1v1h-1zM468,344h1v1h-1zM469,344h1v1h-1zM470,344h1v1h-1zM471,345h1v1h-1zM472,345h1v1h-1zM473,345h1v1h-1zM474,345h1v1h-1zM475,344h1v1h-1zM476,344h1v1h-1zM477,344h1v1h-1zM478,344h1v1h-1zM479,344h1v1h-1zM480,344h1v1h-1zM481,345h1v1h-1zM482,345h1v1h-1zM483,346h1v1h-1zM484,346h1v1h-1zM485,345h1v1h-1zM486,345h1v1h-1zM487,345h1v1h-1zM488,346h1v1h-1zM489,346h1v1h-1zM490,347h1v1h-1zM491,347h1v1h-1zM492,347h1v1h-1zM493,347h1v1h-1zM494,347h1v1h-1zM495,347h1v1h-1zM496,347h1v1h-1zM497,347h1v1h-1zM498,348h1v1h-1zM499,348h1v1h-1zM500,348h1v1h-1zM501,348h1v1h-1zM502,348h1v1h-1zM503,348h1v1h-1zM504,348h1v1h-1zM505,348h1v1h-1zM506,347h1v1h-1zM507,347h1v1h-1zM508,347h1v1h-1zM509,346h1v1h-1zM510,346h1v1h-1zM511,346h1v1h-1zM512,347h1v1h-1zM513,347h1v1h-1zM514,347h1v1h-1zM515,348h1v1h-1zM516,348h1v1h-1zM517,349h1v1h-1zM518,349h1v1h-1zM519,349h1v1h-1zM520,350h1v1h-1zM521,350h1v1h-1zM522,350h1v1h-1zM523,351h1v1h-1zM524,351h1v1h-1zM525,351h1v1h-1zM526,351h1v1h-1zM527,351h1v1h-1zM528,351h1v1h-1zM529,351h1v1h-1zM530,351h1v1h-1zM531,352h1v1h-1zM532,352h1v1h-1zM533,352h1v1h-1zM534,352h1v1h-1zM535,353h1v1h-1zM536,353h1v1h-1zM537,353h1v1h-1zM538,353h1v1h-1zM539,354h1v1h-1zM540,354h1v1h-1zM541,354h1v1h-1zM542,354h1v1h-1zM543,354h1v1h-1zM544,354h1v1h-1zM545,354h1v1h-1zM546,353h1v1h-1zM547,353h1v1h-1zM548,354h1v1h-1zM549,354h1v1h-1zM550,354h1v1h-1zM551,353h1v1h-1zM552,353h1v1h-1zM553,353h1v1h-1zM554,353h1v1h-1zM555,354h1v1h-1zM556,354h1v1h-1zM557,354h1v1h-1zM558,354h1v1h-1zM559,354h1v1h-1zM560,354h1v1h-1zM561,354h1v1h-1zM562,355h1v1h-1zM563,355h1v1h-1zM564,355h1v1h-1zM565,356h1v1h-1zM566,356h1v1h-1zM567,356h1v1h-1zM568,356h1v1h-1zM569,357h1v1h-1zM570,357h1v1h-1zM571,357h1v1h-1zM572,357h1v1h-1zM573,358h1v1h-1zM574,358h1v1h-1zM575,358h1v1h-1zM576,358h1v1h-1zM577,358h1v1h-1zM578,358h1v1h-1zM579,358h1v1h-1zM580,358h1v1h-1zM581,358h1v1h-1zM582,358h1v1h-1zM583,358h1v1h-1zM584,359h1v1h-1zM585,359h1v1h-1zM586,359h1v1h-1zM587,359h1v1h-1zM588,359h1v1h-1zM589,359h1v1h-1zM590,359h1v1h-1zM591,360h1v1h-1zM592,360h1v1h-1zM593,360h1v1h-1zM594,360h1v1h-1zM595,361h1v1h-1zM596,361h1v1h-1zM597,361h1v1h-1zM598,362h1v1h-1zM599,362h1v1h-1zM600,363h1v1h-1zM601,363h1v1h-1zM602,364h1v1h-1zM603,364h1v1h-1zM604,365h1v1h-1zM605,365h1v1h-1zM606,366h1v1h-1zM607,366h1v1h-1zM608,367h1v1h-1zM609,367h1v1h-1zM610,368h1v1h-1zM611,368h1v1h-1zM612,369h1v1h-1zM613,369h1v1h-1zM614,369h1v1h-1zM615,369h1v1h-1zM616,370h1v1h-1zM617,370h1v1h-1zM618,370h1v1h-1zM619,369h1v1h-1zM620,369h1v1h-1z" fill="#ffff00" shape-rendering="crispEdges"/>
<path d="M48.5,434 v6 M60.5,434 v3 M73.5,434 v6 M86.5,434 v3 M99.5,434 v6 M112.5,434 v3 M125.5,434 v6 M138.5,434 v3 M151.5,434 v6 M164.5,434 v3 M177.5,434 v6 M190.5,434 v3 M203.5,434 v6 M216.5,434 v3 M229.5,434 v6 M242.5,434 v3 M255.5,434 v6 M268.5,434 v3 M281.5,434 v6 M294.5,434 v3 M307.5,434 v6 M320.5,434 v3 M333.5,434 v6 M346.5,434 v3 M359.5,434 v6 M372.5,434 v3 M385.5,434 v6 M398.5,434 v3 M411.5,434 v6 M424.5,434 v3 M437.5,434 v6 M450.5,434 v3 M463.5,434 v6 M476.5,434 v3 M489.5,434 v6 M502.5,434 v3 M515.5,434 v6 M528.5,434 v3 M541.5,434 v6 M554.5,434 v3 M567.5,434 v6 M580.5,434 v3 M593.5,434 v6 M606.5,434 v3 M620,77.5 h3 M620,96.5 h6 M620,115.5 h3 M620,133.5 h6 M620,152.5 h3 M620,171.5 h6 M620,189.5 h3 M620,208.5 h6 M620,227.5 h3 M620,246.5 h6 M620,264.5 h3 M620,283.5 h6 M620,302.5 h3 M620,320.5 h6 M620,339.5 h3 M620,358.5 h6 M620,376.5 h3 M620,395.5 h6 M620,414.5 h3" stroke="#303030" stroke-width="1" fill="none" shape-rendering="crispEdges"/>
<text x="73.5" y="450" text-anchor="middle" font-family="Liberation Sans" font-size="11" fill="#000">1</text>
<text x="99.5" y="450" text-anchor="middle" font-family="Liberation Sans" font-size="11" fill="#000">2</text>
<text x="125.5" y="450" text-anchor="middle" font-family="Liberation Sans" font-size="11" fill="#000">3</text>
<text x="151.5" y="450" text-anchor="middle" font-family="Liberation Sans" font-size="11" fill="#000">4</text>
<text x="177.5" y="450" text-anchor="middle" font-family="Liberation Sans" font-size="11" fill="#000">5</text>
<text x="203.5" y="450" text-anchor="middle" font-family="Liberation Sans" font-size="11" fill="#000">6</text>
<text x="229.5" y="450" text-anchor="middle" font-family="Liberation Sans" font-size="11" fill="#000">7</text>
<text x="255.5" y="450" text-anchor="middle" font-family="Liberation Sans" font-size="11" fill="#000">8</text>
<text x="281.5" y="450" text-anchor="middle" font-family="Liberation Sans" font-size="11" fill="#000">9</text>
<text x="307.5" y="450" text-anchor="middle" font-family="Liberation Sans" font-size="11" fill="#000">10</text>
<text x="333.5" y="450" text-anchor="middle" font-family="Liberation Sans" font-size="11" fill="#000">11</text>
<text x="359.5" y="450" text-anchor="middle" font-family="Liberation Sans" font-size="11" fill="#000">12</text>
<text x="385.5" y="450" text-anchor="middle" font-family="Liberation Sans" font-size="11" fill="#000">13</text>
<text x="411.5" y="450" text-anchor="middle" font-family="Liberation Sans" font-size="11" fill="#000">14</text>
<text x="437.5" y="450" text-anchor="middle" font-family="Liberation Sans" font-size="11" fill="#000">15</text>
<text x="463.5" y="450" text-anchor="middle" font-family="Liberation Sans" font-size="11" fill="#000">16</text>
<text x="489.5" y="450" text-anchor="middle" font-family="Liberation Sans" font-size="11" fill="#000">17</text>
<text x="515.5" y="450" text-anchor="middle" font-family="Liberation Sans" font-size="11" fill="#000">18</text>
<text x="541.5" y="450" text-anchor="middle" font-family="Liberation Sans" font-size="11" fill="#000">19</text>
<text x="567.5" y="450" text-anchor="middle" font-family="Liberation Sans" font-size="11" fill="#000">20</text>
<text x="593.5" y="450" text-anchor="middle" font-family="Liberation Sans" font-size="11" fill="#000">21</text>
<text x="620" y="450" font-family="Liberation Sans" font-size="11" fill="#000">kHz</text>
<text x="635" y="69" font-family="Liberation Sans" font-size="11" fill="#000">dB</text>
<text x="629" y="100" font-family="Liberation Sans" font-size="11" fill="#000">-</text>
<text x="636" y="100" font-family="Liberation Sans" font-size="11" fill="#000">10</text>
<text x="629" y="137" font-family="Liberation Sans" font-size="11" fill="#000">-</text>
<text x="636" y="137" font-family="Liberation Sans" font-size="11" fill="#000">20</text>
<text x="629" y="175" font-family="Liberation Sans" font-size="11" fill="#000">-</text>
<text x="636" y="175" font-family="Liberation Sans" font-size="11" fill="#000">30</text>
<text x="629" y="212" font-family="Liberation Sans" font-size="11" fill="#000">-</text>
<text x="636" y="212" font-family="Liberation Sans" font-size="11" fill="#000">40</text>
<text x="629" y="250" font-family="Liberation Sans" font-size="11" fill="#000">-</text>
<text x="636" y="250" font-family="Liberation Sans" font-size="11" fill="#000">50</text>
<text x="629" y="287" font-family="Liberation Sans" font-size="11" fill="#000">-</text>
<text x="636" y="287" font-family="Liberation Sans" font-size="11" fill="#000">60</text>
<text x="629" y="324" font-family="Liberation Sans" font-size="11" fill="#000">-</text>
<text x="636" y="324" font-family="Liberation Sans" font-size="11" fill="#000">70</text>
<text x="629" y="362" font-family="Liberation Sans" font-size="11" fill="#000">-</text>
<text x="636" y="362" font-family="Liberation Sans" font-size="11" fill="#000">80</text>
<text x="629" y="399" font-family="Liberation Sans" font-size="11" fill="#000">-</text>
<text x="636" y="399" font-family="Liberation Sans" font-size="11" fill="#000">90</text>
</svg>
</body></html>
